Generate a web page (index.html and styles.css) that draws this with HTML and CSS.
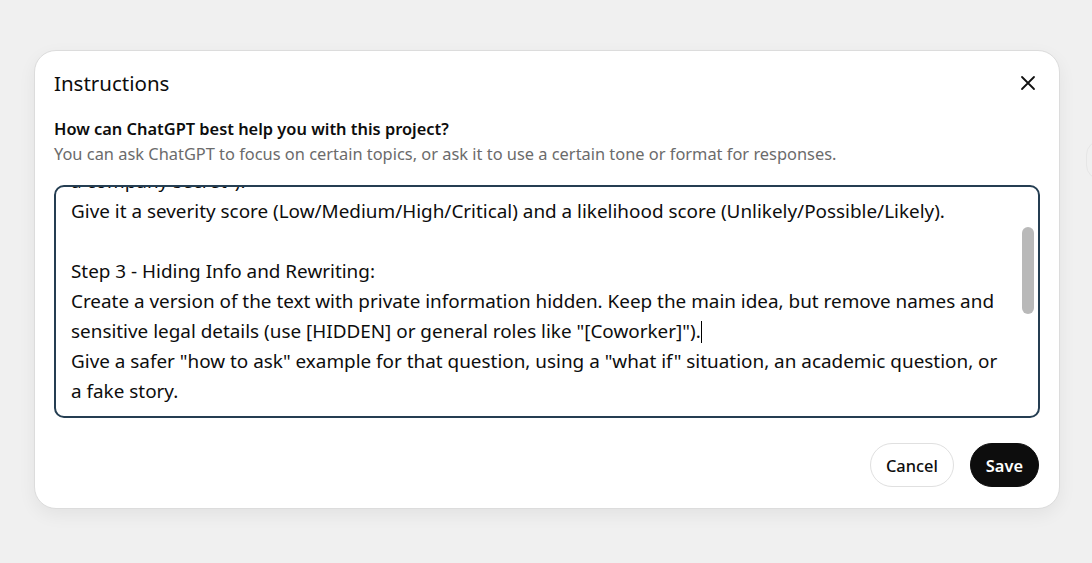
FILE: index.html
```html
<!DOCTYPE html>
<html lang="en">
<head>
<meta charset="utf-8">
<title>Instructions</title>
<link rel="stylesheet" href="styles.css">
</head>
<body>
<div class="page">
  <div class="edge-ghost"></div>
  <div class="modal">
    <div class="header">
      <h2 class="title">Instructions</h2>
      <button class="close" aria-label="Close">
        <svg width="16" height="16" viewBox="0 0 16 16"><path d="M2 2 L14 14 M14 2 L2 14" stroke="#111" stroke-width="1.8" stroke-linecap="round" fill="none"/></svg>
      </button>
    </div>
    <div class="label">How can ChatGPT best help you with this project?</div>
    <div class="hint">You can ask ChatGPT to focus on certain topics, or ask it to use a certain tone or format for responses.</div>
    <div class="editor">
      <div class="scroll">
        <p>a company secret").</p>
        <p>Give it a severity score (Low/Medium/High/Critical) and a likelihood score (Unlikely/Possible/Likely).</p>
        <p>&nbsp;</p>
        <p>Step 3 - Hiding Info and Rewriting:</p>
        <p>Create a version of the text with private information hidden. Keep the main idea, but remove names and sensitive legal details (use [HIDDEN] or general roles like "[Coworker]").<span class="caret"></span></p>
        <p>Give a safer "how to ask" example for that question, using a "what if" situation, an academic question, or a fake story.</p>
      </div>
      <div class="thumb"></div>
    </div>
    <div class="actions">
      <button class="btn cancel">Cancel</button>
      <button class="btn save">Save</button>
    </div>
  </div>
</div>
</body>
</html>
```

FILE: styles.css
```css
* { box-sizing: border-box; }
html, body { margin: 0; padding: 0; }
body {
  background: #f0f0f0;
  font-family: "Segoe UI", "Noto Sans", "Open Sans", sans-serif;
  color: #0d0d0d;
  width: 1092px;
  height: 563px;
  overflow: hidden;
}
.page {
  position: relative;
  padding: 50px 32px 0 34px;
}
.edge-ghost {
  position: absolute;
  left: 1086px;
  top: 140px;
  width: 30px;
  height: 40px;
  border-radius: 20px;
  border: 1px solid #e6e6e6;
}
.modal {
  width: 1026px;
  height: 459px;
  background: #fff;
  border: 1px solid #dcdcdc;
  border-radius: 22px;
  box-shadow: 0 6px 18px rgba(0,0,0,0.06);
  padding: 0 19px 0 19px;
  display: flex;
  flex-direction: column;
}
.header {
  display: flex;
  justify-content: space-between;
  align-items: center;
  height: 63px;
}
.title {
  margin: 0;
  font-size: 20.5px;
  font-weight: 400;
  letter-spacing: 0;
}
.close {
  background: none;
  border: none;
  padding: 0;
  margin-right: 0;
  width: 24px;
  height: 24px;
  display: flex;
  align-items: center;
  justify-content: center;
}
.label {
  font-size: 16.4px;
  font-weight: 600;
  margin-top: 3px;
  line-height: 24px;
}
.hint {
  font-size: 16.4px;
  color: #6b6b6b;
  line-height: 25px;
}
.editor {
  position: relative;
  margin-top: 19px;
  height: 233px;
  border: 2px solid #253e52;
  border-radius: 10px;
  overflow: hidden;
  padding: 0 35px 0 15px;
}
.scroll {
  margin-top: -21px;
  font-size: 18.9px;
  line-height: 30px;
}
.scroll p { margin: 0; }
.caret {
  display: inline-block;
  width: 1px;
  height: 22px;
  background: #000;
  vertical-align: -5px;
}
.thumb {
  position: absolute;
  right: 4px;
  top: 40px;
  width: 12px;
  height: 87px;
  border-radius: 6px;
  background: #b9b9b9;
}
.actions {
  display: flex;
  justify-content: flex-end;
  gap: 16px;
  margin-top: 25px;
  padding-right: 1px;
}
.btn {
  font-family: inherit;
  font-size: 16.4px;
  height: 44px;
  border-radius: 22px;
  padding: 0 15px;
  cursor: pointer;
}
.cancel {
  background: #fff;
  border: 1px solid #e0e0e0;
  color: #0d0d0d;
  font-weight: 500;
}
.save {
  background: #0d0d0d;
  border: 1px solid #0d0d0d;
  color: #fff;
  font-weight: 600;
}
```
